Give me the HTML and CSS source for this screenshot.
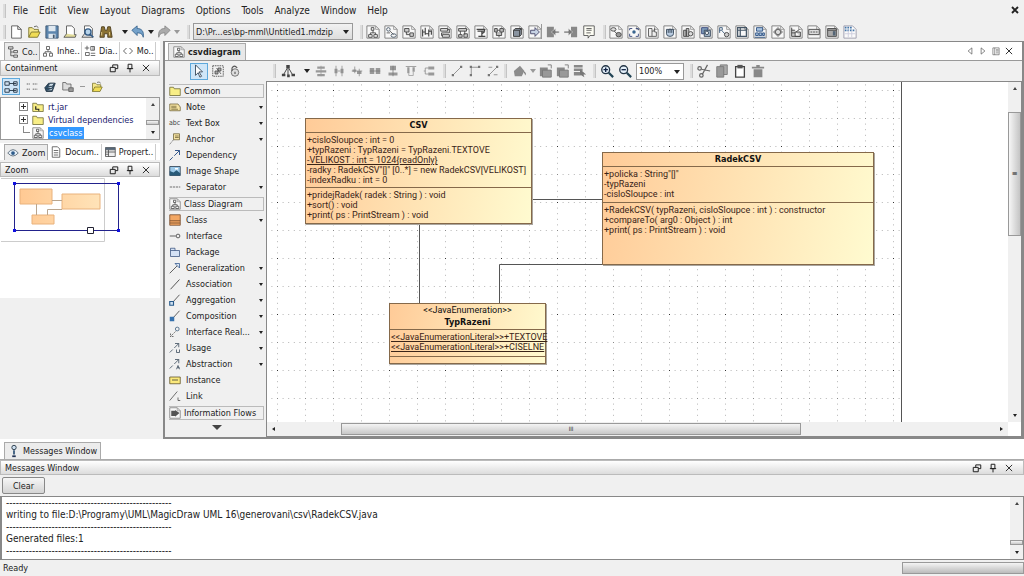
FILE: index.html
```html
<!DOCTYPE html>
<html lang="en">
<head>
<meta charset="utf-8">
<title>csvdiagram - MagicDraw UML</title>
<link rel="stylesheet" href="styles.css">
</head>
<body>
<svg class="defs" aria-hidden="true">
  <symbol id="new" viewBox="0 0 16 16"><path d="M3 1h7l4 4v10H3zM10 1v4h4" fill="#fff" stroke="#555"/></symbol>
  <symbol id="open" viewBox="0 0 16 16"><path d="M2 14V3h4l2 2h5v3" fill="#f4e78a" stroke="#77702a"/><path d="M2 14l3-6h10l-3 6z" fill="#f0dc55" stroke="#77702a"/><path d="M8 2q3-2 5 1" fill="none" stroke="#555"/></symbol>
  <symbol id="save" viewBox="0 0 16 16"><path d="M1 1h14v14H1z" fill="#5d86ae" stroke="#3c5570"/><path d="M4 1h8v6H4zM4 10h8v5H4z" fill="#dfe8f0"/><path d="M9 11h2v4H9z" fill="#46586c"/></symbol>
  <symbol id="print" viewBox="0 0 16 16"><path d="M4 1h6l3 3v8H4z" fill="#fff" stroke="#555"/><path d="M4 10l-3 4h13l1-3h-2" fill="#e2dc9b" stroke="#555"/></symbol>
  <symbol id="preview" viewBox="0 0 16 16"><path d="M4 1h6l3 3v8H4z" fill="#fff" stroke="#555"/><path d="M4 10l-3 4h13" fill="#ddd" stroke="#555"/><circle cx="8" cy="8" r="3.5" fill="#b7d3ea" stroke="#315a85" stroke-width="1.5"/><path d="M10 10l4 4" stroke="#315a85" stroke-width="2"/></symbol>
  <symbol id="find" viewBox="0 0 16 16"><path d="M3 2h3l1 4h2l1-4h3l2 12h-5v-4H6v4H1z" fill="#8b7233" stroke="#4c3d1c"/><path d="M3 8v4M12 8v4" stroke="#e3cd8b"/></symbol>
  <symbol id="undo" viewBox="0 0 16 16"><path d="M1 6l6-5v3c5 0 8 3 7 10-1-4-3-5-7-5v3z" fill="#75a2ca" stroke="#39658f"/></symbol>
  <symbol id="redo" viewBox="0 0 16 16"><path d="M15 6L9 1v3C4 4 1 7 2 14c1-4 3-5 7-5v3z" fill="#aaa" stroke="#888"/></symbol>
  <symbol id="page" viewBox="0 0 16 16"><path d="M1 1h10l4 4v10H1z" fill="#f8f8f8" stroke="#777"/><path d="M11 1v4h4" fill="none" stroke="#999"/></symbol>
  <symbol id="d1" viewBox="0 0 16 16"><use href="#page"/><path d="M8 6v3M5 11V9h6v2M6 3h3v3H6zM3 11h4v3H3zM9 11h4v3H9z" fill="none" stroke="#444"/></symbol>
  <symbol id="d2" viewBox="0 0 16 16"><use href="#page"/><circle cx="5" cy="5" r="2" fill="none" stroke="#456"/><path d="M3 9h4M7 7l4 4" stroke="#555"/><ellipse cx="11" cy="12" rx="3" ry="2" fill="none" stroke="#456"/></symbol>
  <symbol id="d3" viewBox="0 0 16 16"><use href="#page"/><path d="M3 4h5v4H3zM9 9h4v4H9zM5 8v3h4" fill="#ccc" stroke="#444"/></symbol>
  <symbol id="d4" viewBox="0 0 16 16"><use href="#page"/><path d="M3 5v8M6 3v8M10 5v8M13 6v5M3 8h3M6 10h4M10 7h3" fill="none" stroke="#444" stroke-width="1.3"/></symbol>
  <symbol id="d5" viewBox="0 0 16 16"><use href="#page"/><path d="M3 4h8v3H3zM5 11h8v3H5zM11 5h2v4H4v3h1" fill="#ddd" stroke="#444"/></symbol>
  <symbol id="d6" viewBox="0 0 16 16"><use href="#page"/><path d="M3 4h9v3H3zM5 7v4M10 7v4M3 11h4v3H3zM9 10h4v4H9z" fill="#ccc" stroke="#444"/></symbol>
  <symbol id="d7" viewBox="0 0 16 16"><use href="#page"/><path d="M3 5h9v2H4M9 7v6M5 13h8M9 10l3-2" fill="none" stroke="#444" stroke-width="1.4"/></symbol>
  <symbol id="d8" viewBox="0 0 16 16"><use href="#page"/><path d="M3 4h3v4H3zM9 4h4v4H9zM6 6h3M5 8v4h6V8M8 12v2" fill="#bbb" stroke="#444"/></symbol>
  <symbol id="d9" viewBox="0 0 16 16"><use href="#page"/><path d="M4 6l2-2h7v7l-2 2H4zM4 6h7v7M11 6l2-2" fill="#8a94a0" stroke="#333"/></symbol>
  <symbol id="d10" viewBox="0 0 16 16"><use href="#page"/><path d="M3 6h5V3l5 5-5 5v-3H3z" fill="#c7d3e4" stroke="#446"/></symbol>
  <symbol id="left" viewBox="0 0 16 16"><path d="M1 2h8v12H1z" fill="#888"/><path d="M15 7h-4V4L6 8l5 4V9h4z" fill="#777" stroke="#eee" stroke-width=".5"/></symbol>
  <symbol id="right" viewBox="0 0 16 16"><path d="M8 2h7v12H8z" fill="#888"/><path d="M0 7h5V4l5 4-5 4V9H0z" fill="#777" stroke="#eee" stroke-width=".5"/></symbol>
  <symbol id="msg" viewBox="0 0 16 16"><path d="M2 1h12v11H9l-2 3v-3H2z" fill="#fdfdf4" stroke="#555"/><path d="M5 4h6M5 6h6M5 9h5" stroke="#555"/></symbol>
  <symbol id="e1" viewBox="0 0 16 16"><use href="#page"/><ellipse cx="5" cy="5" rx="3" ry="2" fill="#ddd" stroke="#444"/><path d="M6 7l3 3" stroke="#444"/><ellipse cx="11" cy="11" rx="3" ry="2.5" fill="#999" stroke="#444"/></symbol>
  <symbol id="e2" viewBox="0 0 16 16"><use href="#page"/><circle cx="8" cy="8" r="2" fill="#39658f"/><path d="M3 6V4h3M10 4h3v2M3 10v3h3M10 13h3v-3" fill="none" stroke="#347"/></symbol>
  <symbol id="e3" viewBox="0 0 16 16"><use href="#page"/><path d="M4 4h4v9H4zM8 7h2l1-3v4h2v5H8" fill="#eee" stroke="#555"/></symbol>
  <symbol id="e4" viewBox="0 0 16 16"><use href="#page"/><path d="M4 5h8v5q0 3-4 3t-4-3zM6 5v4M8 4v5M10 5v4" fill="#b8cbe0" stroke="#345"/></symbol>
  <symbol id="e5" viewBox="0 0 16 16"><use href="#page"/><path d="M3 6h3v7H3zM6 4h3v9H6z" fill="#bbb" stroke="#444"/><circle cx="11" cy="10" r="2.5" fill="#ddd" stroke="#444"/></symbol>
  <symbol id="e6" viewBox="0 0 16 16"><use href="#page"/><path d="M3 3h7v7H3z" fill="#7f9dbb" stroke="#347"/><path d="M6 6h7v7H6z" fill="#a9bdd2" stroke="#345"/><circle cx="9" cy="9" r="2" fill="#eee" stroke="#345"/></symbol>
  <symbol id="e7" viewBox="0 0 16 16"><use href="#page"/><path d="M3 3v6M3 3h3v3H3M6 7l4 4" fill="none" stroke="#357"/><circle cx="11" cy="11" r="2.5" fill="#ccc" stroke="#444"/></symbol>
  <symbol id="e8" viewBox="0 0 16 16"><use href="#page"/><path d="M3 3h10v10H3zM3 6h10M6 3v10" fill="none" stroke="#456" stroke-width="1.4"/></symbol>
  <symbol id="e9" viewBox="0 0 16 16"><use href="#page"/><path d="M4 3h7v4H4zM3 9h3v3H3zM7 9h3v3H7zM11 9h2v3h-2zM2 14h12" fill="#a9c4e0" stroke="#2a4f80"/></symbol>
  <symbol id="e10" viewBox="0 0 16 16"><use href="#page"/><path d="M8 3l5 5-5 5-5-5z" fill="none" stroke="#444"/><circle cx="8" cy="8" r="3" fill="#ddd" stroke="#555"/></symbol>
  <symbol id="e11" viewBox="0 0 16 16"><use href="#page"/><path d="M3 3v10h10M3 6h4M3 9h4M7 8h6v5H7zM8 8l4-3" fill="#ccc" stroke="#444"/></symbol>
  <symbol id="e12" viewBox="0 0 16 16"><use href="#page"/><path d="M2 5h12v6H2zM4 8h2M7 8h2M10 8h2" fill="#ddd" stroke="#444"/></symbol>
  <symbol id="e13" viewBox="0 0 16 16"><use href="#page"/><path d="M3 4h10v9H3zM3 6h10" fill="#aaa" stroke="#444"/><path d="M9 7h3v5H9z" fill="#567"/></symbol>
  <symbol id="e14" viewBox="0 0 16 16"><path d="M1 1h10l4 4v10H1z" fill="#fafafa" stroke="#99a"/><path d="M2 3h9M2 6h12" stroke="#47a" stroke-dasharray="2 1" stroke-width="2"/><path d="M2 10h12M6 6v8M10 6v8" stroke="#ccd"/></symbol>
  <symbol id="tree" viewBox="0 0 16 16"><path d="M5 4v9h4M5 8h4M2 1h6v3H2zM9 6h5v3H9zM9 12h5v3H9z" fill="#ddd" stroke="#444"/></symbol>
  <symbol id="inh" viewBox="0 0 16 16"><path d="M8 6v3M4 11V9h8v2M6 2h4v4H6zM2 11h4v4H2zM10 11h4v4h-4z" fill="none" stroke="#444"/></symbol>
  <symbol id="dia" viewBox="0 0 16 16"><path d="M4 1v6M1 4h6M9 2h5v5H9zM12 2v5M2 10h5v4H2zM9 11h6M9 14h6" fill="none" stroke="#444"/></symbol>
  <symbol id="model" viewBox="0 0 16 16"><path d="M6 4L2 8l4 4M10 4l4 4-4 4" fill="none" stroke="#333"/></symbol>
  <symbol id="float" viewBox="0 0 16 16"><path d="M2 7h8v7H2zM6 7V3h8v6h-4" fill="none" stroke="#222" stroke-width="1.6"/></symbol>
  <symbol id="pin" viewBox="0 0 16 16"><path d="M5 2h6v7H5zM3 9h10M8 9v6" fill="none" stroke="#222" stroke-width="1.6"/></symbol>
  <symbol id="close" viewBox="0 0 16 16"><path d="M3 3l10 10M13 3L3 13" stroke="#333" stroke-width="1.6"/></symbol>
  <symbol id="bigclose" viewBox="0 0 16 16"><path d="M4 4l8 8M12 4l-8 8" stroke="#222" stroke-width="2.5"/></symbol>
  <symbol id="nodes" viewBox="0 0 16 16"><path d="M1 2h5v4H1zM1 10h5v4H1zM6 4h8M6 12h8M11 2h4v4h-4zM11 10h4v4h-4z" fill="#cfe0f0" stroke="#234"/></symbol>
  <symbol id="dots" viewBox="0 0 16 16"><path d="M1 4h5M9 4h6M1 11h5M9 11h6" stroke="#888" stroke-dasharray="1.5 1" stroke-width="2"/></symbol>
  <symbol id="layers" viewBox="0 0 16 16"><path d="M1 9l5-6h9l-4 11H3z" fill="#2f4f68" stroke="#1d3040"/><path d="M5 7l3-4h6l-3 4zM3 10h7l2-3M3 13h7l2-3" fill="#d3e3ee" stroke="#1d3040"/></symbol>
  <symbol id="foldbox" viewBox="0 0 16 16"><path d="M1 2h4l1 2h6v8H1z" fill="#ddd" stroke="#555"/><path d="M9 9h6v5H9z" fill="#999" stroke="#555"/></symbol>
  <symbol id="folder" viewBox="0 0 16 16"><path d="M1 14V3h5l1 2h8v9z" fill="#f8ee86" stroke="#66632e"/></symbol>
  <symbol id="jar" viewBox="0 0 16 16"><use href="#folder"/><path d="M5 7v4h4v2" fill="none" stroke="#222" stroke-width="1.6"/></symbol>
  <symbol id="eye" viewBox="0 0 16 16"><path d="M1 8q7-9 14 0-7 8-14 0z" fill="#e4eef7" stroke="#456"/><circle cx="8" cy="8" r="2.5" fill="#2d5b8a"/></symbol>
  <symbol id="doc" viewBox="0 0 16 16"><path d="M3 1h7l3 3v11H3z" fill="#fff" stroke="#444"/><path d="M5 6h6M5 9h6M5 12h6" stroke="#444"/></symbol>
  <symbol id="props" viewBox="0 0 16 16"><path d="M2 2h13v12H2zM2 5h13M6 5v9M2 8h13M2 11h4" fill="#eee" stroke="#444"/><path d="M2 2h13v3H2z" fill="#567"/></symbol>
  <symbol id="cursor" viewBox="0 0 16 16"><path d="M4 1l8 8H8l3 5-2 1-2-5-3 3z" fill="#fff" stroke="#345"/></symbol>
  <symbol id="group" viewBox="0 0 16 16"><path d="M1 1h14v14H1z" fill="none" stroke="#333" stroke-dasharray="2 1"/><path d="M4 8h4v4H4zM8 4h4v4H8zM6 4l6 8" fill="#aaa" stroke="#444"/></symbol>
  <symbol id="lock" viewBox="0 0 16 16"><circle cx="8" cy="10" r="5" fill="#ddd" stroke="#555"/><path d="M4 8V4q3-5 7 0M8 9v3" fill="none" stroke="#555" stroke-width="1.5"/></symbol>
  <symbol id="hier" viewBox="0 0 16 16"><path d="M8 5v8M7 5L3 12M9 5l4 7" stroke="#333"/><path d="M6 1h4v4H6zM1 11h4v3H1zM7 12h3v3H7zM12 11h4v3h-4z" fill="#444"/></symbol>
  <symbol id="a1" viewBox="0 0 16 16"><path d="M3 2h10v3H3zM1 7h14v3H1zM3 12h10v3H3z" fill="#999"/><path d="M8 1v14" stroke="#999"/></symbol>
  <symbol id="a2" viewBox="0 0 16 16"><path d="M2 5h4v6H2zM10 5h4v6h-4z" fill="#999"/><path d="M4 1v14M12 1v14M6 8h4" stroke="#888"/></symbol>
  <symbol id="a3" viewBox="0 0 16 16"><path d="M2 6h5v3H2zM8 8h6v4H8z" fill="#999"/><path d="M5 2v9M11 5v10M1 8h14" stroke="#888"/></symbol>
  <symbol id="a4" viewBox="0 0 16 16"><path d="M1 4h6v8H1zM9 4h6v8H9z" fill="#999"/><path d="M1 8h14" stroke="#777"/></symbol>
  <symbol id="a5" viewBox="0 0 16 16"><path d="M4 1h8v6H4zM2 10h12v4H2z" fill="#999"/><path d="M8 1v14" stroke="#777"/></symbol>
  <symbol id="a6" viewBox="0 0 16 16"><path d="M1 2h14" stroke="#888"/><path d="M3 3h3v8H3zM10 3h3v6h-3z" fill="#999"/><path d="M5 11v3h6V9" fill="none" stroke="#999"/></symbol>
  <symbol id="a7" viewBox="0 0 16 16"><path d="M7 2h8v4H7zM7 10h8v4H7z" fill="#999"/><path d="M7 4H3v8h4M1 8h2" fill="none" stroke="#888"/></symbol>
  <symbol id="l1" viewBox="0 0 16 16"><path d="M3 13L13 3" stroke="#777"/><path d="M1 12h3v3H1zM12 1h3v3h-3z" fill="#777"/></symbol>
  <symbol id="l2" viewBox="0 0 16 16"><path d="M3 13V3h10" fill="none" stroke="#777"/><path d="M1 12h3v3H1zM1 1h3v3H1zM12 1h3v3h-3z" fill="#777"/></symbol>
  <symbol id="l3" viewBox="0 0 16 16"><path d="M3 13L13 3M2 3h5M9 13h5" fill="none" stroke="#777"/><path d="M1 12h3v3H1zM12 1h3v3h-3z" fill="#777"/></symbol>
  <symbol id="fill" viewBox="0 0 16 16"><path d="M1 8l7-6 5 6-3 6H2z" fill="#8c8c8c"/><path d="M12 8q4 2 2 5z" fill="#777"/></symbol>
  <symbol id="c1" viewBox="0 0 16 16"><path d="M1 4h9v10H1z" fill="#888"/><path d="M4 7h10v8H4z" fill="#999" stroke="#777"/><path d="M10 1h4v4" fill="none" stroke="#777"/></symbol>
  <symbol id="c3" viewBox="0 0 16 16"><path d="M1 1h10v3H1zM1 5h10v3H1zM1 9h8v4H1z" fill="#888"/><path d="M8 6l7 6h-3l1 3-5-3z" fill="#777"/></symbol>
  <symbol id="zin" viewBox="0 0 16 16"><circle cx="6.500" cy="6.500" r="4.500" fill="#e3eff9" stroke="#234" stroke-width="1.500"/><path d="M10 10l5 5" stroke="#245" stroke-width="2.500"/><path d="M4 6.500h5M6.500 4v5" stroke="#124" stroke-width="1.500"/></symbol>
  <symbol id="zout" viewBox="0 0 16 16"><circle cx="6.500" cy="6.500" r="4.500" fill="#e3eff9" stroke="#234" stroke-width="1.500"/><path d="M10 10l5 5" stroke="#245" stroke-width="2.500"/><path d="M4 6.500h5" stroke="#124" stroke-width="1.500"/></symbol>
  <symbol id="cut" viewBox="0 0 16 16"><path d="M5 6l10 2M6 12l6-11" stroke="#666" stroke-width="1.400"/><circle cx="3" cy="5" r="2" fill="none" stroke="#666" stroke-width="1.400"/><circle cx="5" cy="13" r="2" fill="none" stroke="#666" stroke-width="1.400"/></symbol>
  <symbol id="copy" viewBox="0 0 16 16"><path d="M6 1h8v11H6z" fill="#aaa" stroke="#777"/><path d="M2 3h8v12H2z" fill="#999" stroke="#777"/></symbol>
  <symbol id="paste" viewBox="0 0 16 16"><path d="M3 3h10v12H3z" fill="#fff" stroke="#444" stroke-width="1.500"/><path d="M5 1h6v4H5z" fill="#555"/></symbol>
  <symbol id="trash" viewBox="0 0 16 16"><path d="M1 3h14v2H1zM6 1h4v2H6zM3 6h10v9H3z" fill="#888"/></symbol>
  <symbol id="prev" viewBox="0 0 16 16"><path d="M11 3v10L5 8z" fill="none" stroke="#444"/></symbol>
  <symbol id="next" viewBox="0 0 16 16"><path d="M5 3v10l6-5z" fill="none" stroke="#444"/></symbol>
  <symbol id="list" viewBox="0 0 16 16"><path d="M3 3h10v11H3z" fill="none" stroke="#555"/><path d="M6 3v11M8 6h4M8 8h4M8 11h4" stroke="#555"/></symbol>
  <symbol id="note" viewBox="0 0 16 16"><path d="M1 4h11l3 4v5H1z" fill="#f5e3a2" stroke="#6e6237"/><path d="M3 7h7M3 9h7M3 11h9" stroke="#6e6237"/></symbol>
  <symbol id="anchor" viewBox="0 0 16 16"><path d="M6 1h8v8H6z" fill="#f5e3a2" stroke="#6e6237"/><path d="M8 4h5M8 6h5" stroke="#6e6237"/><path d="M6 9l-5 6" stroke="#555" stroke-dasharray="2 1"/></symbol>
  <symbol id="dep" viewBox="0 0 16 16"><path d="M1 15l4-4M7 9l7-7M8 2h6v6" fill="none" stroke="#2f548b" stroke-width="1.300"/></symbol>
  <symbol id="image" viewBox="0 0 16 16"><path d="M1 2h14v12H1z" fill="#9cc9e8" stroke="#234"/><path d="M1 14V8l5 2 4-3 5 4v3z" fill="#285a78"/><path d="M8 4h4v2H8z" fill="#fff"/></symbol>
  <symbol id="sep" viewBox="0 0 16 16"><path d="M1 8h14" stroke="#444" stroke-dasharray="3 1"/></symbol>
  <symbol id="class" viewBox="0 0 16 16"><path d="M1 1h14v14H1zM1 9h14M1 12h14" fill="#f3a763" stroke="#6b4426"/></symbol>
  <symbol id="iface" viewBox="0 0 16 16"><path d="M1 8h8" stroke="#333"/><circle cx="12" cy="8" r="2.500" fill="none" stroke="#333"/></symbol>
  <symbol id="pack" viewBox="0 0 16 16"><path d="M2 3h6v3h6v8H2zM2 6h6" fill="#d5e2f5" stroke="#38527d"/></symbol>
  <symbol id="gen" viewBox="0 0 16 16"><path d="M1 15L11 5" stroke="#333"/><path d="M8 2h6v6z" fill="#dbe7f4" stroke="#2f548b"/></symbol>
  <symbol id="line" viewBox="0 0 16 16"><path d="M2 15L14 2" stroke="#444" stroke-width="1.200"/></symbol>
  <symbol id="agg" viewBox="0 0 16 16"><path d="M5 11l9-10" stroke="#333"/><path d="M1 10h5v5H1z" fill="#cfe0f0" stroke="#275a8b" stroke-width="1.500"/></symbol>
  <symbol id="comp" viewBox="0 0 16 16"><path d="M5 11l9-10" stroke="#333"/><path d="M1 9h6v6H1z" fill="#3470ad"/></symbol>
  <symbol id="real" viewBox="0 0 16 16"><path d="M2 14l7-7M2 10v4h4" fill="none" stroke="#444" stroke-dasharray="2 1"/><circle cx="11" cy="4" r="2.500" fill="none" stroke="#357"/></symbol>
  <symbol id="usage" viewBox="0 0 16 16"><path d="M1 14l4-4M7 8l6-6M8 2h5v5M10 10v4h4v-4" fill="none" stroke="#345"/></symbol>
  <symbol id="abs" viewBox="0 0 16 16"><path d="M1 14l4-4M7 8l6-6M8 2h5v5M10 15l2-5 2 5M11 13h3" fill="none" stroke="#345"/></symbol>
  <symbol id="inst" viewBox="0 0 16 16"><path d="M1 4h14v9H1z" fill="#fbe97c" stroke="#5a4c20"/><path d="M4 8h8" stroke="#333"/></symbol>
  <symbol id="link" viewBox="0 0 16 16"><path d="M1 14L11 2M12 10v4h3" fill="none" stroke="#444"/></symbol>
  <symbol id="flow" viewBox="0 0 16 16"><use href="#page"/><path d="M3 5h5v7H3zM8 4l6 4-6 5z" fill="#555"/></symbol>
  <symbol id="info" viewBox="0 0 16 16"><circle cx="8" cy="4" r="2.500" fill="#cfe0f0" stroke="#234"/><path d="M8 7v5" stroke="#357" stroke-width="2"/><path d="M6 13h4v2H6z" fill="#235"/></symbol>
</svg>

<nav class="menubar">
  <i class="grip"></i>
  <button>File</button><button>Edit</button><button>View</button><button>Layout</button><button>Diagrams</button><button>Options</button><button>Tools</button><button>Analyze</button><button>Window</button><button>Help</button>
  <button class="push" aria-label="Close diagram"><svg class="ic small"><use href="#bigclose"/></svg></button>
</nav>

<div class="toolbar">
  <i class="grip"></i>
  <div class="tools file">
    <svg class="ic"><use href="#new"/></svg><svg class="ic"><use href="#open"/></svg><svg class="ic"><use href="#save"/></svg><svg class="ic"><use href="#print"/></svg><svg class="ic"><use href="#preview"/></svg><svg class="ic"><use href="#find"/></svg>
  </div>
  <div class="tools undo"><i class="down"></i><svg class="ic"><use href="#undo"/></svg><i class="down"></i><svg class="ic"><use href="#redo"/></svg><i class="down off"></i></div>
  <i class="grip"></i>
  <label class="combo project"><select aria-label="Project"><option>D:\Pr...es\bp-mml\Untitled1.mdzip</option></select></label>
  <i class="grip"></i>
  <div class="tools diagrams">
    <svg class="ic"><use href="#d1"/></svg><svg class="ic"><use href="#d2"/></svg><svg class="ic"><use href="#d3"/></svg><svg class="ic"><use href="#d4"/></svg><svg class="ic"><use href="#d5"/></svg><svg class="ic"><use href="#d6"/></svg><svg class="ic"><use href="#d7"/></svg><svg class="ic"><use href="#d8"/></svg><svg class="ic"><use href="#d9"/></svg><svg class="ic"><use href="#d10"/></svg>
  </div>
  <i class="rule"></i>
  <div class="tools"><svg class="ic"><use href="#left"/></svg><svg class="ic"><use href="#right"/></svg><svg class="ic"><use href="#msg"/></svg></div>
  <i class="grip"></i>
  <div class="tools custom">
    <svg class="ic"><use href="#e1"/></svg><svg class="ic"><use href="#e2"/></svg><svg class="ic"><use href="#e3"/></svg><svg class="ic"><use href="#e4"/></svg><svg class="ic"><use href="#e5"/></svg><svg class="ic"><use href="#e6"/></svg><svg class="ic"><use href="#e7"/></svg><svg class="ic"><use href="#e8"/></svg><svg class="ic"><use href="#e9"/></svg><svg class="ic"><use href="#e10"/></svg><svg class="ic"><use href="#e11"/></svg><svg class="ic"><use href="#e12"/></svg><svg class="ic"><use href="#e13"/></svg><svg class="ic"><use href="#e14"/></svg>
  </div>
</div>

<div class="main">
  <aside class="side">
    <div class="tabs">
      <button class="tab on"><svg class="ic"><use href="#tree"/></svg>Co..</button><button class="tab"><svg class="ic"><use href="#inh"/></svg>Inhe..</button><button class="tab"><svg class="ic"><use href="#dia"/></svg>Dia..</button><button class="tab"><svg class="ic"><use href="#model"/></svg>Mo..</button>
    </div>
    <header class="title">Containment<span class="winctl"><svg><use href="#float"/></svg><svg><use href="#pin"/></svg><svg><use href="#close"/></svg></span></header>
    <div class="treebar"><button class="pressed" aria-label="Inner elements"><svg class="ic"><use href="#nodes"/></svg></button><svg class="ic small"><use href="#dots"/></svg><svg class="ic small"><use href="#layers"/></svg><svg class="ic small"><use href="#foldbox"/></svg><i class="dash"></i><svg class="ic small"><use href="#open"/></svg></div>
    <div class="treebox">
      <ul class="tree">
        <li class="cut"><i class="plus"></i><i class="stub"></i></li>
        <li><i class="plus"></i><svg class="ic small"><use href="#jar"/></svg>rt.jar</li>
        <li><i class="plus"></i><svg class="ic small"><use href="#folder"/></svg>Virtual dependencies</li>
        <li class="leaf"><i class="elbow"></i><svg class="ic small"><use href="#d1"/></svg><mark>csvclass</mark></li>
      </ul>
      <div class="vbar"><i class="up"></i><span class="thumb"></span><i class="down"></i></div>
    </div>
    <div class="tabs lower">
      <button class="tab on"><svg class="ic"><use href="#eye"/></svg>Zoom</button><button class="tab"><svg class="ic"><use href="#doc"/></svg>Docum..</button><button class="tab"><svg class="ic"><use href="#props"/></svg>Propert..</button>
    </div>
    <header class="title">Zoom<span class="winctl"><svg><use href="#float"/></svg><svg><use href="#pin"/></svg><svg><use href="#close"/></svg></span></header>
    <div class="overview">
      <svg width="130" height="66" viewBox="0 0 130 66">
        <defs><linearGradient id="peach"><stop offset="0" stop-color="#ffc993"/><stop offset="1" stop-color="#ffe3b8"/></linearGradient></defs>
        <path d="M0 1.500h103.500v63H0" fill="none" stroke="#ccc"/>
        <path d="M19 12h32v15H19zM61 17h38v15H61zM31 38h22v9H31z" fill="url(#peach)" stroke="#e9b27c"/>
        <path d="M35.500 27v11M51 23.500h10M46.500 38v-5.500H61" fill="none" stroke="#b9a58e"/>
        <path d="M13.500 6.500h104v47h-104z" fill="none" stroke="#22228c"/>
        <path d="M12 5h3v3h-3zM116 5h3v3h-3zM12 52h3v3h-3zM116 52h3v3h-3z" fill="#1010e0"/>
        <path d="M86.500 50.500h6v6h-6z" fill="#fff" stroke="#223"/>
      </svg>
    </div>
  </aside>

  <section class="editor">
    <div class="doctabs">
      <button class="tab on"><svg class="ic"><use href="#d1"/></svg>csvdiagram</button>
      <span class="docctl"><svg><use href="#prev"/></svg><svg><use href="#next"/></svg><svg><use href="#list"/></svg><svg><use href="#close"/></svg></span>
    </div>
    <div class="toolbar draw">
      <div class="tools first"><button class="pressed" aria-label="Select"><svg class="ic"><use href="#cursor"/></svg></button><svg class="ic small"><use href="#group"/></svg><svg class="ic small"><use href="#lock"/></svg></div>
      <i class="grip"></i>
      <div class="tools"><svg class="ic"><use href="#hier"/></svg><i class="down wide"></i></div>
      <div class="tools align"><svg class="ic small"><use href="#a1"/></svg><svg class="ic small"><use href="#a2"/></svg><svg class="ic small"><use href="#a3"/></svg><svg class="ic small"><use href="#a4"/></svg><svg class="ic small"><use href="#a5"/></svg><svg class="ic small"><use href="#a6"/></svg><svg class="ic small"><use href="#a7"/></svg></div>
      <i class="grip"></i>
      <div class="tools"><svg class="ic small"><use href="#l1"/></svg><svg class="ic small"><use href="#l2"/></svg><svg class="ic small"><use href="#l3"/></svg></div>
      <i class="grip"></i>
      <div class="tools order"><svg class="ic"><use href="#fill"/></svg><i class="down off"></i><svg class="ic"><use href="#c1"/></svg><svg class="ic"><use href="#c1"/></svg><svg class="ic"><use href="#c3"/></svg></div>
      <i class="grip"></i>
      <div class="tools"><svg class="ic"><use href="#zin"/></svg><svg class="ic"><use href="#zout"/></svg></div>
      <label class="combo zoom"><select aria-label="Zoom"><option>100%</option></select></label>
      <i class="grip"></i>
      <div class="tools"><svg class="ic"><use href="#cut"/></svg><svg class="ic"><use href="#copy"/></svg><svg class="ic"><use href="#paste"/></svg><svg class="ic"><use href="#trash"/></svg></div>
    </div>
    <div class="work">
      <div class="palette">
        <button class="head"><svg class="ic"><use href="#folder"/></svg>Common</button>
        <button><svg class="ic"><use href="#note"/></svg>Note<i class="down"></i></button>
        <button><span class="abc">abc</span>Text Box<i class="down"></i></button>
        <button><svg class="ic"><use href="#anchor"/></svg>Anchor<i class="down"></i></button>
        <button><svg class="ic"><use href="#dep"/></svg>Dependency</button>
        <button><svg class="ic"><use href="#image"/></svg>Image Shape</button>
        <button><svg class="ic"><use href="#sep"/></svg>Separator<i class="down"></i></button>
        <button class="head"><svg class="ic"><use href="#d1"/></svg>Class Diagram</button>
        <button><svg class="ic"><use href="#class"/></svg>Class<i class="down"></i></button>
        <button><svg class="ic"><use href="#iface"/></svg>Interface</button>
        <button><svg class="ic"><use href="#pack"/></svg>Package</button>
        <button><svg class="ic"><use href="#gen"/></svg>Generalization<i class="down"></i></button>
        <button><svg class="ic"><use href="#line"/></svg>Association<i class="down"></i></button>
        <button><svg class="ic"><use href="#agg"/></svg>Aggregation<i class="down"></i></button>
        <button><svg class="ic"><use href="#comp"/></svg>Composition<i class="down"></i></button>
        <button><svg class="ic"><use href="#real"/></svg>Interface Real...<i class="down"></i></button>
        <button><svg class="ic"><use href="#usage"/></svg>Usage<i class="down"></i></button>
        <button><svg class="ic"><use href="#abs"/></svg>Abstraction<i class="down"></i></button>
        <button><svg class="ic"><use href="#inst"/></svg>Instance</button>
        <button><svg class="ic"><use href="#link"/></svg>Link</button>
        <button class="head"><svg class="ic"><use href="#flow"/></svg>Information Flows</button>
        <button class="more" aria-label="More"><i class="down"></i></button>
      </div>
      <div class="view">
        <div class="canvas">
          <svg class="sheet">
            <defs><pattern id="grid" x="10" y="8" width="56" height="56" patternUnits="userSpaceOnUse">
              <path d="M0 .5h56M0 28.500h56" stroke="#b4b4b4" stroke-dasharray="1 4.600"/>
              <path d="M.5 0v56M28.500 0v56" stroke="#b4b4b4" stroke-dasharray="1 4.600"/>
              <path d="M0 0h1v1H0z" fill="#333"/><path d="M28 0h1v1h-1zM0 28h1v1H0zM28 28h1v1h-1z" fill="#888"/>
            </pattern></defs>
            <rect width="634" height="100%" fill="url(#grid)"/>
            <path d="M634.500 0v600" stroke="#555"/>
            <path d="M265 117.500h71M152.500 142v80M336 182.500H232.500V222" fill="none" stroke="#555"/>
          </svg>
          <article class="uml csv">
            <h2>CSV</h2>
            <div class="attrs">+cisloSloupce : int = 0<br>+typRazeni : TypRazeni = TypRazeni.TEXTOVE<br><u>-VELIKOST : int = 1024{readOnly}</u><br>-radky : RadekCSV"[]" [0..*] = new RadekCSV[VELIKOST]<br>-indexRadku : int = 0</div>
            <div>+pridejRadek( radek : String ) : void<br>+sort() : void<br>+print( ps : PrintStream ) : void</div>
          </article>
          <article class="uml radek">
            <h2>RadekCSV</h2>
            <div>+policka : String"[]"<br>-typRazeni<br>-cisloSloupce : int</div>
            <div>+RadekCSV( typRazeni, cisloSloupce : int ) : constructor<br>+compareTo( arg0 : Object ) : int<br>+print( ps : PrintStream ) : void</div>
          </article>
          <article class="uml typ">
            <h2><small>&lt;&lt;JavaEnumeration&gt;&gt;</small>TypRazeni</h2>
            <div><u>&lt;&lt;JavaEnumerationLiteral&gt;&gt;+TEXTOVE</u><br><u>&lt;&lt;JavaEnumerationLiteral&gt;&gt;+CISELNE</u></div>
            <div></div>
          </article>
        </div>
        <div class="vbar big"><i class="up"></i><span class="thumb">≡</span><i class="down"></i></div>
        <div class="hbar"><i class="lt"></i><span class="thumb">III</span><i class="rt"></i></div>
      </div>
    </div>
  </section>
</div>

<section class="messages">
  <div class="msgtabs"><button class="tab on"><svg class="ic"><use href="#info"/></svg>Messages Window</button></div>
  <header class="title">Messages Window<span class="winctl"><svg><use href="#float"/></svg><svg><use href="#pin"/></svg><svg><use href="#close"/></svg></span></header>
  <div class="actions"><button class="clear">Clear</button></div>
  <div class="logbox">
    <div class="log">
      <p>---------------------------------------------------</p>
      <p>writing to file:D:\Programy\UML\MagicDraw UML 16\generovani\csv\RadekCSV.java</p>
      <p>---------------------------------------------------</p>
      <p>Generated files:1</p>
      <p>---------------------------------------------------</p>
    </div>
    <div class="vbar"><i class="up"></i><span class="thumb"></span><i class="down"></i></div>
  </div>
</section>
<footer class="status"><span>Ready</span><div class="memory"></div></footer>
</body>
</html>
```
FILE: styles.css
```css
* { box-sizing: border-box; }
body {
  margin: 0;
  height: 100vh;
  display: flex;
  flex-direction: column;
  overflow: hidden;
  background: #f0f0f0;
  color: #222;
  font: 9px/12px "DejaVu Sans Condensed", "DejaVu Sans", sans-serif;
}
button, select {
  font: inherit;
  color: inherit;
  background: none;
  border: 0;
  padding: 0;
  margin: 0;
  white-space: nowrap;
}
.defs { position: absolute; width: 0; height: 0; }
.ic { width: 14px; height: 14px; flex: none; }
.ic.small { width: 12px; height: 12px; }
.grip { width: 3px; height: 14px; flex: none; background: #ddd; border-right: 1px solid #c4c4c4; }
.rule { width: 1px; height: 15px; background: #999; flex: none; }

.down, .up, .lt, .rt { flex: none; width: 0; height: 0; border: 2px solid transparent; }
.down { border-top: 3px solid #222; border-bottom: 0; }
.up { border-bottom: 3px solid #444; border-top: 0; }
.lt { border-right: 3px solid #222; border-left: 0; }
.rt { border-left: 3px solid #222; border-right: 0; }
.tools .down { border-width: 4px 3px 0; }
.down.off { border-top-color: #999; }

.menubar { display: flex; align-items: center; gap: 11px; height: 22px; padding: 0 3px; font-size: 10px; flex: none; }
.menubar .grip { margin-right: -4px; }
.push { margin-left: auto; height: 14px; }

.toolbar { display: flex; align-items: center; height: 19px; padding-left: 3px; flex: none; }
.tools { display: flex; align-items: center; gap: 4px; }
.file { margin-left: 3px; }
.undo { margin: 0 7px 0 9px; gap: 3px; }
.combo { position: relative; display: flex; }
.combo select { appearance: none; width: 100%; height: 17px; padding: 0 2px; border: 1px solid #999; }
.combo::after { content: ""; position: absolute; right: 4px; top: 7px; border: 3px solid transparent; border-top: 4px solid #222; border-bottom: 0; }
.project { width: 160px; margin: 0 7px 0 3px; }
.project select { background: linear-gradient(#f2f2f2, #ddd); }
.diagrams { width: 172px; justify-content: space-between; margin: 0 3px; }
.rule + .tools { margin: 0 7px 0 4px; }
.custom { width: 243px; justify-content: space-between; margin-left: 3px; }

.main { flex: 1; min-height: 0; display: flex; gap: 3px; }
.side { width: 160px; flex: none; display: flex; flex-direction: column; }
.tabs { display: flex; height: 19px; padding: 1px 4px 0; background: #fff; flex: none; }
.tab { display: flex; align-items: center; gap: 3px; padding: 0 2px; border-right: 1px solid #ccc; flex: 1 1 auto; overflow: hidden; }
.tabs .ic { width: 12px; height: 12px; }
.tab.on { background: #ececec; border: 1px solid #aaa; border-bottom: 0; }
.title {
  display: flex;
  align-items: center;
  height: 16px;
  padding: 0 8px 0 4px;
  border: 1px solid #bbb;
  background: linear-gradient(#fff, #dcdcdc);
  flex: none;
}
.winctl, .docctl { display: flex; gap: 6px; margin-left: auto; }
.winctl svg, .docctl svg { width: 10px; height: 10px; }
.treebar { display: flex; align-items: center; gap: 6px; height: 21px; padding-left: 2px; flex: none; }
.pressed { display: flex; align-items: center; justify-content: center; width: 18px; height: 17px; background: #cfe6f8; border: 1px solid #5fa9dc; }
.dash { width: 5px; height: 1px; background: #999; }
.treebox { display: flex; height: 43px; border: 1px solid #999; background: #fff; overflow: hidden; flex: none; }
.tree { flex: 1; margin: 0; padding: 0 0 0 18px; list-style: none; color: #1a1a6e; display: flex; flex-direction: column; justify-content: flex-end; white-space: nowrap; }
.tree li { display: flex; align-items: center; gap: 4px; height: 13px; flex: none; }
.tree mark { background: #3399ff; color: #fff; padding: 0 1px; }
.plus { width: 9px; height: 9px; border: 1px solid #888; background: linear-gradient(#333, #333) center / 5px 1px no-repeat, linear-gradient(#333, #333) center / 1px 5px no-repeat; }
.stub { width: 11px; height: 9px; border: 1px solid #66632e; background: #f8ee86; }
.elbow { width: 7px; height: 7px; margin: 0 -2px 0 4px; border: solid #888; border-width: 0 0 1px 1px; align-self: flex-start; }
.vbar { display: flex; flex-direction: column; align-items: center; justify-content: space-between; width: 13px; padding: 5px 0; background: #f0f0f0; flex: none; }
.thumb { display: flex; align-items: center; justify-content: center; border: 1px solid #999; background: linear-gradient(#f4f4f4, #c8c8c8); font-size: 8px; line-height: 8px; }
.vbar .thumb { width: 100%; height: 5px; margin-top: auto; margin-bottom: 6px; }
.lower { margin-top: 3px; height: 17px; }
.lower + .title { margin-top: 2px; height: 15px; }
.overview { height: 121px; background: #fff; padding-left: 1px; }

.editor { flex: 1; min-width: 0; display: flex; flex-direction: column; border: 1px solid #888; border-width: 1px 2px 2px; }
.doctabs { display: flex; align-items: flex-end; justify-content: space-between; height: 19px; padding: 0 8px 0 3px; background: #fff; border-bottom: 1px solid #999; flex: none; }
.doctabs .tab { flex: none; height: 17px; padding: 0 4px; gap: 3px; font-weight: bold; background: #e8e8e8; }
.doctabs .ic { width: 12px; height: 12px; }
.docctl { gap: 3px; padding-bottom: 4px; }
.draw { height: 20px; }
.first { margin: 0 31px 0 22px; gap: 3px; }
.draw .grip + .tools { margin: 0 4px; }
.draw .first + .grip + .tools { margin: 0 0 0 5px; }
.draw .tools .wide { margin: 0 1px 0 5px; }
.draw .align { margin: 0 7px 0 3px; }
.tools .small { margin: 0 1px; }
.draw .grip + .order { gap: 3px; margin: 0 6px; }
.zoom { width: 48px; margin: 0 6px 0 0; }
.zoom select { background: #fff; }

.work { flex: 1; min-height: 0; display: flex; }
.palette { width: 101px; flex: none; display: flex; flex-direction: column; padding: 3px 2px 0 4px; }
.palette button { display: flex; align-items: center; gap: 5px; height: 16px; flex: none; text-align: left; }
.palette .ic, .abc { width: 12px; height: 12px; }
.abc { flex: none; font-size: 7px; letter-spacing: 0; color: #444; }
.palette .down { margin: 0 1px 0 auto; border-width: 3px 2px 0; }
.palette .head { height: 14px; margin: 0 0 1px; border: 1px solid #bbb; border-width: 1px 1px 1px 0; gap: 3px; }
.palette .head:not(:first-child) { margin-top: 2px; }
.palette .more { justify-content: center; height: 13px; }
.palette .more .down { margin: 0; border-width: 5px 5px 0; border-top-color: #444; }
.view { flex: 1; min-width: 0; display: grid; grid-template-columns: 1fr 13px; grid-template-rows: 1fr 14px; border: 1px solid #888; background: #fff; }
.canvas { position: relative; overflow: hidden; }
.sheet { position: absolute; inset: 0; width: 100%; height: 100%; }
.uml {
  position: absolute;
  display: flex;
  flex-direction: column;
  border: 1px solid #85694a;
  background: linear-gradient(100deg, #ffcb98, #fffbd0);
  box-shadow: 1px 1px 0 #aaa69f;
  font: 9px/10px Roboto, "Liberation Sans", sans-serif;
  color: #3a2418;
  white-space: nowrap;
}
.uml h2 { margin: 0; height: 13px; font: bold 9px/13px "DejaVu Sans Condensed", sans-serif; text-align: center; color: #111; }
.uml small { display: block; font: 9px/12px Roboto, "Liberation Sans", sans-serif; }
.uml div { border-top: 1px solid #85694a; padding: 2px 1px; }
.csv { left: 38px; top: 36px; width: 227px; height: 106px; }
.csv .attrs { height: 55px; }
.radek { left: 335px; top: 70px; width: 272px; height: 113px; }
.radek h2 + div { height: 36px; }
.typ { left: 122px; top: 221px; width: 157px; height: 61px; }
.typ h2 { height: 25px; }
.typ h2 + div { height: 27px; }
.vbar.big .thumb { height: 124px; margin: 22px 0 auto; background: linear-gradient(90deg, #f6f6f6, #c4c4c4); }
.hbar { display: flex; align-items: center; padding: 1px 5px; background: #f0f0f0; }
.hbar .thumb { width: 63%; height: 12px; margin: 0 auto 0 9%; font-size: 6px; }

.messages { flex: none; padding-top: 1px; background: #fff; }
.msgtabs { height: 20px; display: flex; align-items: flex-end; padding-left: 4px; border-bottom: 1px solid #aaa; }
.msgtabs .tab { flex: none; height: 17px; padding: 0 3px 0 2px; gap: 2px; }
.messages .title { height: 15px; padding-right: 9px; }
.actions { display: flex; align-items: center; height: 21px; padding-left: 2px; background: #f0f0f0; }
.clear { width: 43px; height: 17px; border: 1px solid #888; border-radius: 2px; background: linear-gradient(#f6f6f6, #d4d4d4); }
.logbox { display: flex; height: 64px; border: 1px solid #888; border-left-width: 2px; }
.log { flex: 1; padding: 0 4px; }
.log p { margin: 0; font-size: 10px; line-height: 12px; }
.status { display: flex; align-items: center; height: 16px; padding-left: 3px; flex: none; }
.memory { width: 122px; height: 12px; margin-left: auto; border: 1px solid #999; background: linear-gradient(#f4f4f4, #bbb); }
```
